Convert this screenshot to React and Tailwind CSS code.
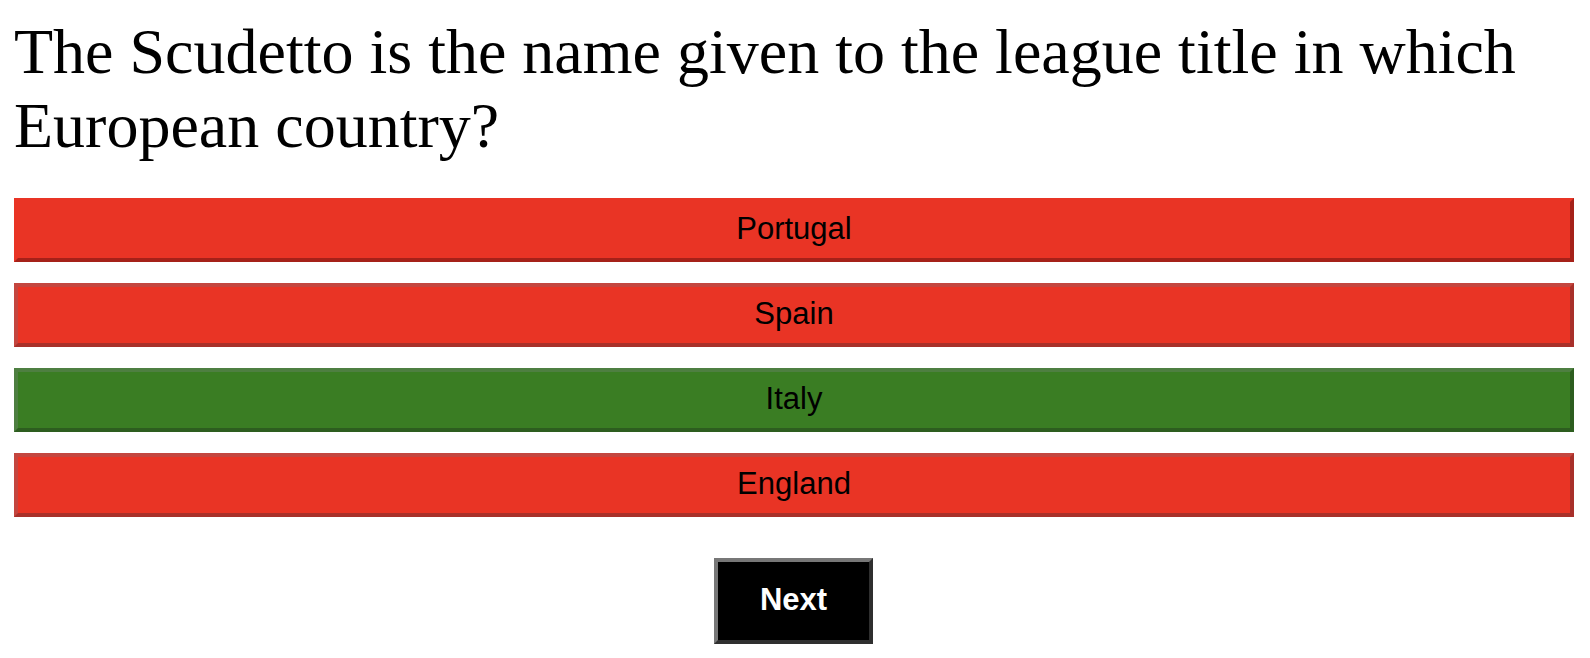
export default function App() {
  const answers = [
    { t: "Portugal", c: "bg-[#e93425] border-t-[#e93425] border-l-[#e93425] border-b-[#a52119] border-r-[#a52119]" },
    { t: "Spain", c: "bg-[#e93425] border-t-[#c4463f] border-l-[#c4463f] border-b-[#a8302a] border-r-[#a8302a]" },
    { t: "Italy", c: "bg-[#3a7d23] border-t-[#4e7f41] border-l-[#4e7f41] border-b-[#2d5d1f] border-r-[#2d5d1f]" },
    { t: "England", c: "bg-[#e93425] border-t-[#c4463f] border-l-[#c4463f] border-b-[#a8302a] border-r-[#a8302a]" },
  ];
  return (
    <div className="bg-white w-[1590px] h-[658px] pl-[14px] pr-[16px] pt-[15px]">
      <h1 className="text-[64px] leading-[74px] text-black font-normal" style={{ fontFamily: '"Liberation Serif", "Times New Roman", serif' }}>
        The Scudetto is the name given to the league title in which European country?
      </h1>
      <div className="mt-[35px] flex flex-col gap-[21px]">
        {answers.map((a) => (
          <button
            key={a.t}
            className={`h-[64px] w-full border-4 border-solid text-[31px] leading-[36px] pb-[2px] text-black ${a.c}`}
            style={{ fontFamily: '"Liberation Sans", Arial, sans-serif' }}
          >
            {a.t}
          </button>
        ))}
      </div>
      <div className="mt-[41px] flex justify-center">
        <button
          className="h-[86px] w-[159px] border-4 border-solid bg-black text-white font-bold text-[31px] border-t-[#777777] border-l-[#777777] border-b-[#2f2f2f] border-r-[#2f2f2f] ml-[-1px] pb-[2px]"
          style={{ fontFamily: '"Liberation Sans", Arial, sans-serif' }}
        >
          Next
        </button>
      </div>
    </div>
  );
}
